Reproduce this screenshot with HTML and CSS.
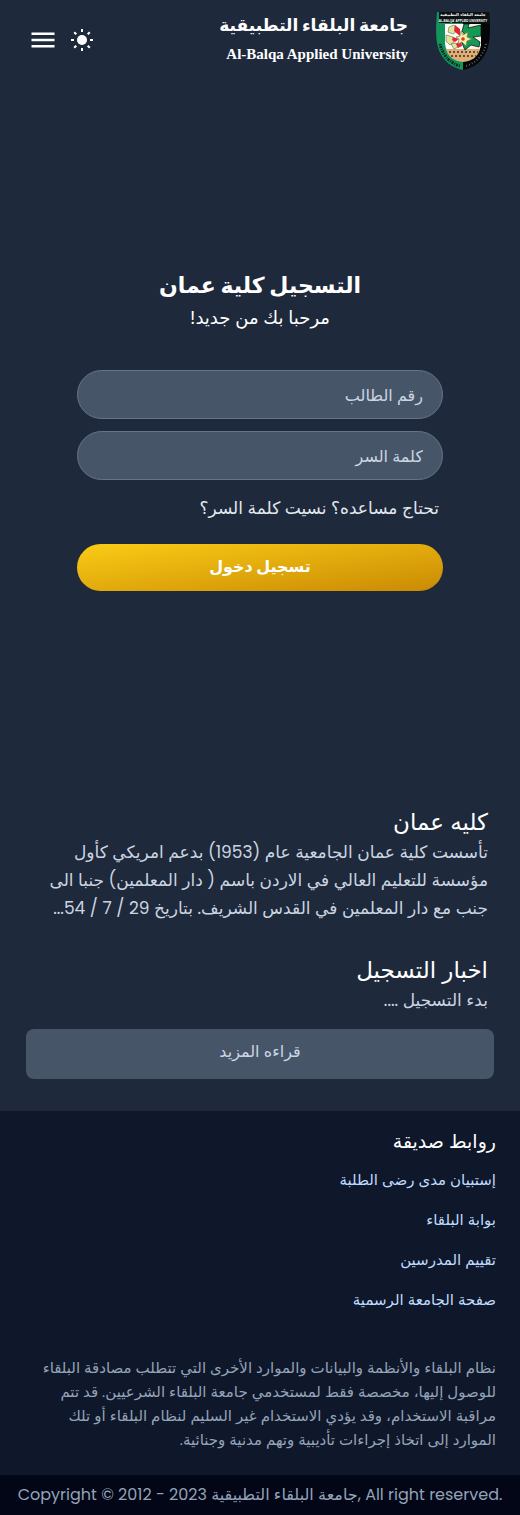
FILE: index.html
```html
<!DOCTYPE html>
<html lang="ar" dir="rtl">
<head>
<meta charset="utf-8">
<meta name="viewport" content="width=device-width, initial-scale=1">
<title>التسجيل كلية عمان</title>
<link rel="stylesheet" href="styles.css">
</head>
<body>
<header class="header">
  <a class="brand" href="#">
    <svg class="logo" viewBox="0 0 54 60" aria-hidden="true">
      <defs>
        <clipPath id="shield"><path d="M1 1H53C55 24 54 36 48 45C43 53 36 57 27 59C18 57 11 53 6 45C0 36 -1 24 1 1Z"/></clipPath>
      </defs>
      <g clip-path="url(#shield)">
        <path fill="#12945a" d="M0 0H27V60H0Z"/>
        <path fill="#050607" d="M27 0H54V60H27Z"/>
        <path fill="#0b1213" d="M3 1H54V12H3Z"/>
        <path fill="#fff" d="M9 13H27V48C16 46 10 42 9 33Z"/>
        <path fill="#f7f2e5" d="M27 13H45V34C44 42 37 47 27 48Z"/>
        <path fill="#dcae78" d="M10 38H44C42 46 36 50 27 51C18 50 12 46 10 38Z"/>
        <path stroke="#6b4a30" stroke-width="2" stroke-dasharray="2 2" d="M13 41H42M15 45H40"/>
        <path fill="#159957" stroke="#101a14" stroke-width=".8" d="M28 13H33L32 17L45 14V25L37 26L44 31L43 36L35 34L29 39L25 30L30 25L26 20Z"/>
        <path fill="#e4e39a" stroke="#748052" stroke-width=".7" d="M13 16L18 14L21 20L17 23L12 21ZM10 24L17 26L18 31L14 34L10 30ZM15 33L20 32L22 36L18 38Z"/>
        <path fill="#df2736" d="M19 14L24 18L24 25L18 20ZM17 26L23 28L19 31L16 29ZM20 33L25 29L26 35L22 37Z"/>
        <path fill="#f5eda6" stroke="#71804a" stroke-width=".7" d="M25 20L27 24L32 21L31 26L36 28L31 30L30 35L26 31L22 33L23 28L20 26L24 25Z"/>
        <circle cx="27" cy="28" r="1.8" fill="#e02f3d"/>
        <path fill="none" stroke="#07291d" stroke-width="3" stroke-dasharray="1 1 2 1" d="M4 33C7 45 14 52 24 55"/>
        <path fill="none" stroke="#5c6464" stroke-width="2" stroke-dasharray="1 2" d="M50 33C47 45 40 52 30 55"/>
      </g>
      <text class="crest-ar" x="27" y="5">جامعة البلقاء التطبيقية</text>
      <text class="crest-en" x="27" y="11">AL-BALQA’ APPLIED UNIVERSITY</text>
    </svg>
    <span class="brand-names">
      <span class="brand-ar">جامعة البلقاء التطبيقية</span>
      <span class="brand-en" lang="en" dir="ltr">Al-Balqa Applied University</span>
    </span>
  </a>
  <div class="tools">
    <button class="icon-button" type="button" aria-label="تبديل المظهر">
      <svg viewBox="0 0 24 24" width="24" height="24" fill="none" stroke="currentColor" stroke-width="2"><circle cx="12" cy="12" r="5" fill="currentColor" stroke="none"/><path d="M12 1V4M12 20V23M1 12H4M20 12H23M4.2 4.2L6.3 6.3M17.7 17.7L19.8 19.8M4.2 19.8L6.3 17.7M17.7 6.3L19.8 4.2"/></svg>
    </button>
    <button class="icon-button" type="button" aria-label="القائمة">
      <svg viewBox="0 0 24 24" width="24" height="24" fill="none" stroke="currentColor" stroke-width="2.4"><path d="M.5 5.7H23.5M.5 12H23.5M.5 18.3H23.5"/></svg>
    </button>
  </div>
</header>
<main>
  <section class="login">
    <form class="login-form">
      <h1 class="login-title">التسجيل كلية عمان</h1>
      <p class="login-welcome">مرحبا بك من جديد!</p>
      <input class="field" type="text" aria-label="رقم الطالب" placeholder="رقم الطالب">
      <input class="field" type="password" aria-label="كلمة السر" placeholder="كلمة السر">
      <a class="help" href="#">تحتاج مساعده؟ نسيت كلمة السر؟</a>
      <button class="submit" type="submit">تسجيل دخول</button>
    </form>
  </section>
  <section class="info">
    <article class="info-block">
      <h2 class="info-title">كليه عمان</h2>
      <p class="info-text">تأسست كلية عمان الجامعية عام (1953) بدعم امريكي كأول مؤسسة للتعليم العالي في الاردن باسم ( دار المعلمين) جنبا الى جنب مع دار المعلمين في القدس الشريف. بتاريخ 29 / 7 / 54...</p>
    </article>
    <article class="info-block">
      <h2 class="info-title">اخبار التسجيل</h2>
      <p class="info-text">بدء التسجيل ....</p>
    </article>
    <button class="more" type="button">قراءه المزيد</button>
  </section>
</main>
<footer>
  <div class="footer-main">
    <h2 class="footer-title">روابط صديقة</h2>
    <nav class="links">
      <a href="#">إستبيان مدى رضى الطلبة</a>
      <a href="#">بوابة البلقاء</a>
      <a href="#">تقييم المدرسين</a>
      <a href="#">صفحة الجامعة الرسمية</a>
    </nav>
    <p class="notice">نظام البلقاء والأنظمة والبيانات والموارد الأخرى التي تتطلب مصادقة البلقاء للوصول إليها، مخصصة فقط لمستخدمي جامعة البلقاء الشرعيين. قد تتم مراقبة الاستخدام، وقد يؤدي الاستخدام غير السليم لنظام البلقاء أو تلك الموارد إلى اتخاذ إجراءات تأديبية وتهم مدنية وجنائية.</p>
  </div>
  <p class="copyright" dir="ltr">Copyright © 2012 - 2023 <bdi>جامعة البلقاء التطبيقية</bdi>, All right reserved.</p>
</footer>
</body>
</html>
```
FILE: styles.css
```css
* { box-sizing: border-box; }
body {
  margin: 0;
  background: #1e293b;
  color: #fff;
  font-family: Poppins, Inter, "DejaVu Sans", sans-serif;
  font-size: 16px;
  line-height: 24px;
}
h1, h2, p { margin: 0; }
a { color: inherit; text-decoration: none; }
button, input { font: inherit; }
button { cursor: pointer; }

.header {
  display: flex;
  align-items: center;
  justify-content: space-between;
  height: 80px;
  padding: 0 30px 0 31px;
}
.brand { display: flex; align-items: center; gap: 28px; }
.logo { width: 54px; height: 60px; margin-top: 2px; }
.crest-ar, .crest-en { fill: #fff; text-anchor: middle; font-weight: bold; }
.crest-ar { font-family: "DejaVu Sans", sans-serif; font-size: 4px; }
.crest-en { font-family: "Liberation Sans", sans-serif; font-size: 3px; direction: ltr; }
.brand-names { display: flex; flex-direction: column; padding-bottom: 2px; }
.brand-ar { font-size: 17px; line-height: 30px; font-weight: 700; }
.brand-en { text-align: right; font: 700 15px/28px "Liberation Serif", serif; }
.tools { display: flex; gap: 15px; }
.icon-button {
  display: flex;
  padding: 0;
  border: 0;
  background: none;
  color: #fff;
}

.login {
  display: flex;
  align-items: center;
  justify-content: center;
  min-height: 700px;
  padding: 0 16px;
}
.login-form {
  display: flex;
  flex-direction: column;
  width: 100%;
  max-width: 366px;
}
.login-title { text-align: center; font-size: 22px; line-height: 32px; font-weight: 700; }
.login-welcome { margin-bottom: 36px; text-align: center; font-size: 18px; line-height: 32px; }
.field {
  width: 100%;
  height: 49px;
  margin-bottom: 12px;
  padding: 2px 19px 0;
  border: 1px solid #64748b;
  border-radius: 25px;
  background: #475569;
  color: #fff;
}
.field::placeholder { color: #cbd5e1; opacity: 1; }
.help { align-self: flex-start; padding: 0 4px; font-size: 17px; line-height: 32px; color: #e2e8f0; }
.submit {
  height: 47px;
  margin-top: 20px;
  border: 0;
  border-radius: 24px;
  background: linear-gradient(to bottom right, #facc15, #ca8a04);
  color: #fff;
  font-weight: 700;
}

.info {
  display: flex;
  flex-direction: column;
  gap: 32px;
  padding: 26px 26px 32px;
}
.info-block { padding: 0 6px; }
.info-title { font-size: 23px; line-height: 32px; font-weight: 400; }
.info-text { font-size: 17px; line-height: 28px; color: #cbd5e1; }
.more {
  height: 50px;
  margin-top: -17px;
  padding: 0 16px 4px;
  border: 0;
  border-radius: 8px;
  background: #475569;
  color: #cbd5e1;
}

.footer-main { padding: 17px 24px 23px; background: #0f172a; }
.footer-title { font-size: 19px; line-height: 28px; font-weight: 400; }
.links {
  display: flex;
  flex-direction: column;
  align-items: flex-start;
  gap: 16px;
  margin: 12px 0 44px;
  font-size: 15px;
  color: #bfdbfe;
}
.notice { font-size: 15px; color: #94a3b8; }
.copyright {
  padding: 8px;
  background: #020617;
  color: #94a3b8;
  text-align: center;
}
```
